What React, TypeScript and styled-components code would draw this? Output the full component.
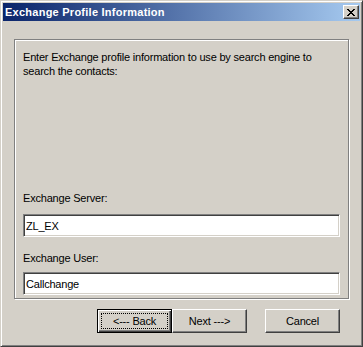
import React from "react";
import styled, { createGlobalStyle } from "styled-components";

const GlobalStyle = createGlobalStyle`
  html, body {
    margin: 0;
    padding: 0;
    background: #d4d0c8;
  }
  body {
    font-family: Tahoma, "Liberation Sans", Arial, sans-serif;
    font-size: 11px;
    letter-spacing: -0.2px;
    color: #000;
  }
`;

const Window = styled.div`
  box-sizing: border-box;
  width: 363px;
  height: 347px;
  background: #d4d0c8;
  border: 1px solid;
  border-color: #d4d0c8 #404040 #404040 #d4d0c8;
  box-shadow: inset 1px 1px #fff, inset -1px -1px #808080;
  padding: 2px;
  display: flex;
  flex-direction: column;
`;

const TitleBar = styled.div`
  height: 18px;
  display: flex;
  align-items: center;
  padding: 0 1px 0 2px;
  background: linear-gradient(to right, #0a246a, #a6caf0);
`;

const Title = styled.span`
  color: #fff;
  font-weight: bold;
  font-size: 11px;
  letter-spacing: 0.25px;
`;

const CloseButton = styled.button`
  box-sizing: border-box;
  margin-left: auto;
  width: 16px;
  height: 14px;
  padding: 0;
  background: #d4d0c8;
  border: 1px solid;
  border-color: #fff #404040 #404040 #fff;
  box-shadow: inset -1px -1px #808080;
  display: flex;
  align-items: center;
  justify-content: center;
`;

const Body = styled.div`
  flex: 1;
  display: flex;
  flex-direction: column;
  padding: 18px 11px 0 11px;
`;

const GroupBox = styled.div`
  box-sizing: border-box;
  height: 260px;
  border: 1px solid #808080;
  box-shadow: inset 1px 1px #fff, 1px 1px #fff;
  padding: 10px 8px 3px 8px;
  display: flex;
  flex-direction: column;
`;

const Description = styled.p`
  margin: 0;
  line-height: 14px;
`;

const Fields = styled.div`
  margin-top: auto;
  display: flex;
  flex-direction: column;
`;

const Label = styled.label<{ $first?: boolean }>`
  line-height: 14px;
  margin-top: ${(p) => (p.$first ? 0 : 14)}px;
  margin-bottom: ${(p) => (p.$first ? 9 : 7)}px;
`;

const TextInput = styled.input`
  box-sizing: border-box;
  height: 23px;
  width: 100%;
  margin: 0;
  padding: 0 2px;
  background: #fff;
  border: 1px solid;
  border-color: #808080 #fff #fff #808080;
  box-shadow: inset 1px 1px #404040, inset -1px -1px #d4d0c8;
  font-family: inherit;
  font-size: 11px;
  letter-spacing: inherit;
  color: #000;
  outline: none;
`;

const ButtonRow = styled.div`
  display: flex;
  justify-content: flex-end;
  margin-top: 10px;
  padding-right: 9px;
`;

const Button = styled.button<{ $default?: boolean; $gap?: number }>`
  position: relative;
  box-sizing: border-box;
  width: 75px;
  height: 24px;
  margin: 0 0 0 ${(p) => p.$gap ?? 0}px;
  padding: 0;
  background: #d4d0c8;
  font-family: inherit;
  font-size: 11px;
  letter-spacing: inherit;
  color: #000;
  border: 1px solid;
  border-color: ${(p) => (p.$default ? "#000" : "#fff #404040 #404040 #fff")};
  box-shadow: ${(p) =>
    p.$default
      ? "inset 1px 1px #fff, inset -1px -1px #404040, inset -2px -2px #808080"
      : "inset -1px -1px #808080"};
`;

const FocusRing = styled.span`
  position: absolute;
  inset: 3px;
  border: 1px dotted #000;
  pointer-events: none;
`;

export default function App() {
  return (
    <>
      <GlobalStyle />
      <Window>
        <TitleBar>
          <Title>Exchange Profile Information</Title>
          <CloseButton aria-label="Close">
            <svg width="8" height="7" viewBox="0 0 8 7" shapeRendering="crispEdges">
              <path
                d="M0 0h2v1h-2zM6 0h2v1h-2zM1 1h2v1h-2zM5 1h2v1h-2zM2 2h4v1h-4zM3 3h2v1h-2zM2 4h4v1h-4zM1 5h2v1h-2zM5 5h2v1h-2zM0 6h2v1h-2zM6 6h2v1h-2z"
                fill="#000"
              />
            </svg>
          </CloseButton>
        </TitleBar>
        <Body>
          <GroupBox>
            <Description>
              Enter Exchange profile information to use by search engine to search the contacts:
            </Description>
            <Fields>
              <Label $first>Exchange Server:</Label>
              <TextInput defaultValue="ZL_EX" />
              <Label>Exchange User:</Label>
              <TextInput defaultValue="Callchange" />
            </Fields>
          </GroupBox>
          <ButtonRow>
            <Button $default>
              <FocusRing />
              &lt;--- Back
            </Button>
            <Button>Next ---&gt;</Button>
            <Button $gap={18}>Cancel</Button>
          </ButtonRow>
        </Body>
      </Window>
    </>
  );
}
